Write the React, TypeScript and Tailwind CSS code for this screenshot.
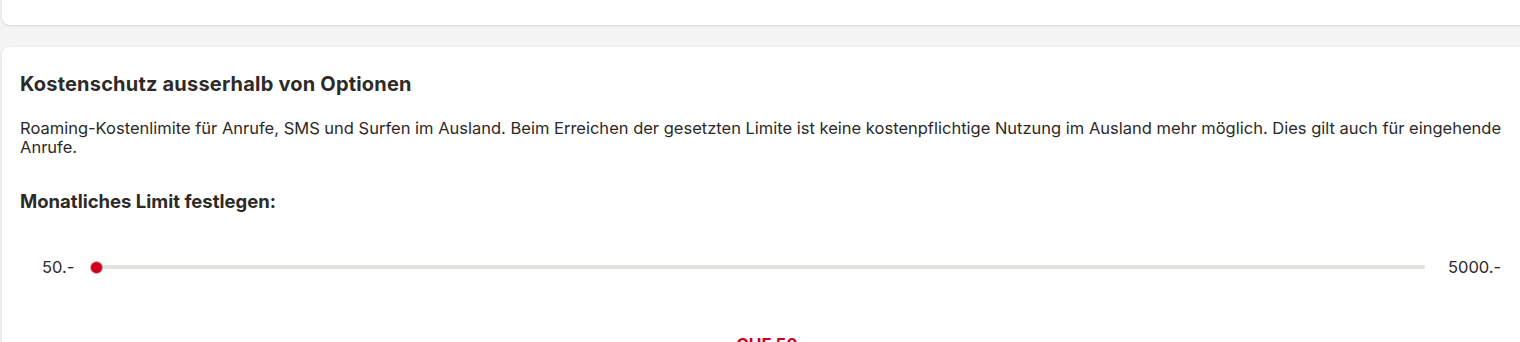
export default function App() {
    return (
        <div className="h-[342px] w-[1520px] overflow-hidden bg-[#f4f4f4] pl-[2px]" style={{ fontFamily: 'Inter, "Noto Sans", sans-serif' }}>
            {/* previous card, only its bottom is visible */}
            <div className="mt-[-40px] h-[65px] w-[1540px] rounded-lg bg-white shadow-[0_1px_3px_rgba(0,0,0,0.12)]"></div>

            <div className="mt-[22px] w-[1540px] rounded-lg bg-white px-[18px] pt-[25px] pb-8 text-[#2d2a28] shadow-[0_1px_3px_rgba(0,0,0,0.12)]">
                <h2 className="text-[20px] leading-6 font-bold tracking-[0.2px]">Kostenschutz ausserhalb von Optionen</h2>
                <p className="mt-[23px] w-[1500px] text-[16.5px] leading-[19px]">
                    Roaming-Kostenlimite für Anrufe, SMS und Surfen im Ausland. Beim Erreichen der gesetzten Limite ist keine kostenpflichtige Nutzung im Ausland mehr möglich. Dies gilt auch für eingehende Anrufe.
                </p>
                <h3 className="mt-[32px] text-[18.5px] leading-6 font-bold">Monatliches Limit festlegen:</h3>

                <div className="mt-[44px] flex items-center">
                    <span className="ml-[22px] w-[31px] text-[16.5px] leading-5">50.-</span>
                    <div className="relative ml-[18px] flex h-[11px] w-[1334px] items-center">
                        <div className="h-[4px] w-full rounded-full bg-[#e4e2de]"></div>
                        <div className="absolute left-0 top-0 h-[11px] w-[11px] rounded-full bg-[#d0021b] shadow-[0_0_0_1px_rgba(160,0,10,0.35)]"></div>
                    </div>
                    <span className="ml-[23px] text-[16.5px] leading-5">5000.-</span>
                </div>

                <div className="mt-[56px] w-[1494px] text-center text-[17px] leading-6 font-bold text-[#d0021b]">CHF 50</div>
            </div>
        </div>
    );
}
